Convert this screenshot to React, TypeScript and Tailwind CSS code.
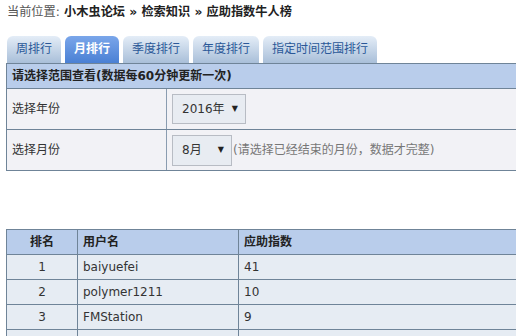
import React from "react";

const tabs = ["周排行", "月排行", "季度排行", "年度排行", "指定时间范围排行"];
const rows = [
  ["1", "baiyuefei", "41"],
  ["2", "polymer1211", "10"],
  ["3", "FMStation", "9"],
  ["", "", ""],
];

export default function App() {
  return (
    <div
      className="w-[516px] h-[336px] overflow-hidden bg-white text-[12px] text-[#333]"
      style={{ fontFamily: '"DejaVu Sans", "Noto Sans CJK SC", sans-serif' }}
    >
      <div className="w-[600px] pl-[6px]">
        <div className="h-[25px] pt-[4px] pl-[1px] leading-[17px] text-[12.2px]">
          <span className="text-[#555]">当前位置:</span>
          <span className="font-bold text-[#222]"> 小木虫论坛 » 检索知识 » 应助指数牛人榜</span>
        </div>
        <div className="flex gap-[4px] pl-[1px] pt-[11px] items-end">
          {tabs.map((t, i) => (
            <div
              key={t}
              className={
                i === 1
                  ? "h-[27px] w-fit px-[9px] rounded-t-[6px] bg-gradient-to-b from-[#7aa6ea] to-[#4a80d4] text-white font-bold leading-[27px] text-[12px]"
                  : "h-[27px] w-fit px-[9px] rounded-t-[6px] bg-gradient-to-b from-[#e4edf7] to-[#a9bfd9] text-[#2a5898] leading-[27px] text-[12px]"
              }
            >
              {t}
            </div>
          ))}
        </div>
        <div className="border border-[#6f8498] border-b-0">
          <div className="h-[25px] bg-[#b9cdeb] border-b border-[#6f8498] pl-[5px] leading-[24px] font-bold text-[#222]">
            请选择范围查看(数据每60分钟更新一次)
          </div>
          <div className="flex h-[41px] bg-[#f2f2f6] border-b border-[#6f8498]">
            <div className="w-[160px] border-r border-[#8a9cb0] pl-[5px] leading-[40px] text-[#333]">选择年份</div>
            <div className="flex items-center pl-[5px]">
              <div className="w-[74px] h-[30px] border border-[#b8bcc4] bg-[#e8ecf2] flex items-center justify-between pl-[9px] pr-[7px] text-[#333]">
                <span>2016年</span>
                <span className="text-[8px] text-[#222]">▼</span>
              </div>
            </div>
          </div>
          <div className="flex h-[41px] bg-[#f2f2f6] border-b border-[#6f8498]">
            <div className="w-[160px] border-r border-[#8a9cb0] pl-[5px] leading-[40px] text-[#333]">选择月份</div>
            <div className="flex items-center pl-[5px]">
              <div className="w-[60px] h-[31px] border border-[#b8bcc4] bg-[#e8ecf2] flex items-center justify-between pl-[9px] pr-[7px] text-[#333]">
                <span>8月</span>
                <span className="text-[8px] text-[#222]">▼</span>
              </div>
              <span className="ml-[1px] text-[#777]">(请选择已经结束的月份，数据才完整)</span>
            </div>
          </div>
        </div>
        <div className="h-[58px]" />
        <div className="border-t border-l border-[#6f8498]">
          <div className="flex h-[25px] bg-[#b9cdeb] border-b border-[#6f8498] font-bold text-[#222]">
            <div className="w-[71px] border-r border-[#6f8498] text-center leading-[24px]">排名</div>
            <div className="w-[161px] border-r border-[#6f8498] pl-[5px] leading-[24px]">用户名</div>
            <div className="flex-1 pl-[5px] leading-[24px]">应助指数</div>
          </div>
          {rows.map((r, i) => (
            <div key={i} className="flex h-[25px] bg-[#e6ecf3] border-b border-[#6f8498] text-[#333]">
              <div className="w-[71px] border-r border-[#6f8498] text-center leading-[24px]">{r[0]}</div>
              <div className="w-[161px] border-r border-[#6f8498] pl-[5px] leading-[24px]">{r[1]}</div>
              <div className="flex-1 pl-[5px] leading-[24px]">{r[2]}</div>
            </div>
          ))}
        </div>
      </div>
    </div>
  );
}
